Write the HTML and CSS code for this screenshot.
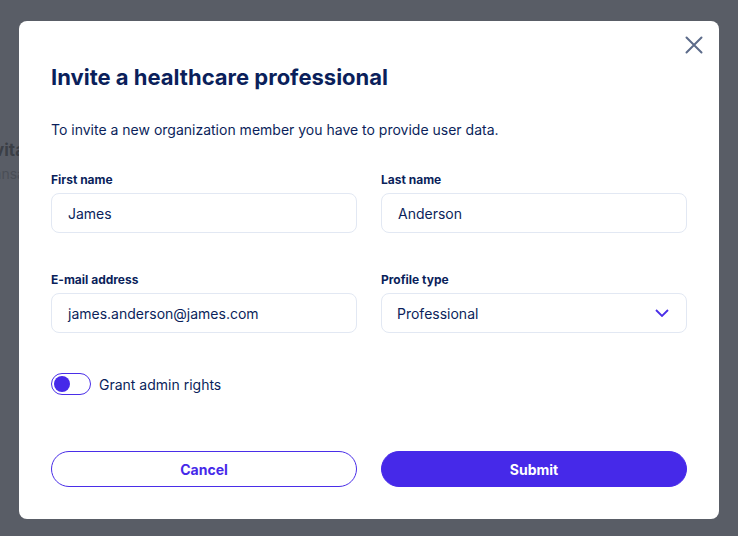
FILE: index.html
```html
<!DOCTYPE html>
<html>
<head>
<meta charset="utf-8">
<link rel="stylesheet" href="styles.css">
</head>
<body>
<div class="page">
  <div class="page-title">Invitations</div>
  <div class="page-sub">Transactions</div>
</div>
<div class="overlay">
  <div class="modal">
    <button class="close" aria-label="Close">
      <svg width="18" height="18" viewBox="0 0 18 18"><path d="M1.5 1.5 L16.5 16.5 M16.5 1.5 L1.5 16.5" stroke="#5c6b8a" stroke-width="2" fill="none" stroke-linecap="round"/></svg>
    </button>
    <h1 class="title">Invite a healthcare professional</h1>
    <p class="intro">To invite a new organization member you have to provide user data.</p>
    <div class="grid">
      <div class="field">
        <label class="label">First name</label>
        <div class="input">James</div>
      </div>
      <div class="field">
        <label class="label">Last name</label>
        <div class="input">Anderson</div>
      </div>
      <div class="field">
        <label class="label">E-mail address</label>
        <div class="input">james.anderson@james.com</div>
      </div>
      <div class="field">
        <label class="label">Profile type</label>
        <div class="input select">
          <span>Professional</span>
          <svg width="14" height="8" viewBox="0 0 14 8"><path d="M1 1 L7 7 L13 1" stroke="#4a2ee8" stroke-width="1.8" fill="none"/></svg>
        </div>
      </div>
    </div>
    <div class="toggle-row">
      <span class="toggle"><span class="knob"></span></span>
      <span class="toggle-label">Grant admin rights</span>
    </div>
    <div class="actions">
      <button class="btn btn-outline">Cancel</button>
      <button class="btn btn-primary">Submit</button>
    </div>
  </div>
</div>
</body>
</html>
```

FILE: styles.css
```css
* { box-sizing: border-box; }
html, body { margin: 0; padding: 0; }
body {
  width: 738px;
  height: 536px;
  background: #595d66;
  font-family: Inter, "Noto Sans", sans-serif;
  overflow: hidden;
  position: relative;
}
.page {
  padding-top: 140px;
}
.page-title {
  margin-left: -21px;
  font-size: 17px;
  font-weight: 700;
  color: #3b3f46;
  line-height: 20px;
}
.page-sub {
  margin-top: 4px;
  margin-left: -20px;
  font-size: 14px;
  color: #4a4e56;
  line-height: 20px;
}
.overlay {
  position: absolute;
  inset: 0;
  padding: 21px 19px 17px 19px;
}
.modal {
  position: relative;
  background: #fff;
  border-radius: 8px;
  width: 700px;
  height: 498px;
  padding: 40px 32px 32px 32px;
  color: #0b1f5b;
}
.close {
  position: absolute;
  top: 15px;
  right: 16px;
  width: 18px;
  height: 18px;
  padding: 0;
  border: 0;
  background: none;
  display: flex;
}
.title {
  margin: 0;
  font-size: 22px;
  line-height: 32px;
  font-weight: 700;
  color: #0b1f5b;
}
.intro {
  margin: 27px 0 0 0;
  font-size: 14px;
  line-height: 20px;
  color: #0b1f5b;
}
.grid {
  margin-top: 32px;
  display: grid;
  grid-template-columns: 306px 306px;
  column-gap: 24px;
  row-gap: 39px;
}
.field { display: flex; flex-direction: column; }
.label {
  font-size: 12px;
  font-weight: 700;
  line-height: 16px;
  margin-bottom: 5px;
  color: #0b1f5b;
}
.input {
  height: 40px;
  border: 1px solid #e2e8f3;
  border-radius: 8px;
  padding: 0 16px;
  display: flex;
  align-items: center;
  font-size: 14px;
  color: #0b1f5b;
}
.select { justify-content: space-between; padding-left: 15px; padding-right: 17px; }
.toggle-row {
  margin-top: 40px;
  display: flex;
  align-items: center;
  gap: 8px;
}
.toggle {
  width: 40px;
  height: 22px;
  border: 1.5px solid #4a2ee8;
  border-radius: 11px;
  display: flex;
  align-items: center;
  padding-left: 2px;
}
.knob {
  width: 16px;
  height: 16px;
  border-radius: 50%;
  background: #4629e9;
}
.toggle-label {
  font-size: 14px;
  color: #0b1f5b;
}
.actions {
  margin-top: 56px;
  display: grid;
  grid-template-columns: 306px 306px;
  column-gap: 24px;
}
.btn {
  height: 36px;
  border-radius: 18px;
  font-family: Inter, "Noto Sans", sans-serif;
  font-size: 14px;
  font-weight: 700;
  cursor: pointer;
}
.btn-outline {
  background: #fff;
  border: 1px solid #4a2ee8;
  color: #4629e9;
}
.btn-primary {
  background: #4629e9;
  border: 1px solid #4629e9;
  color: #fff;
}
```
